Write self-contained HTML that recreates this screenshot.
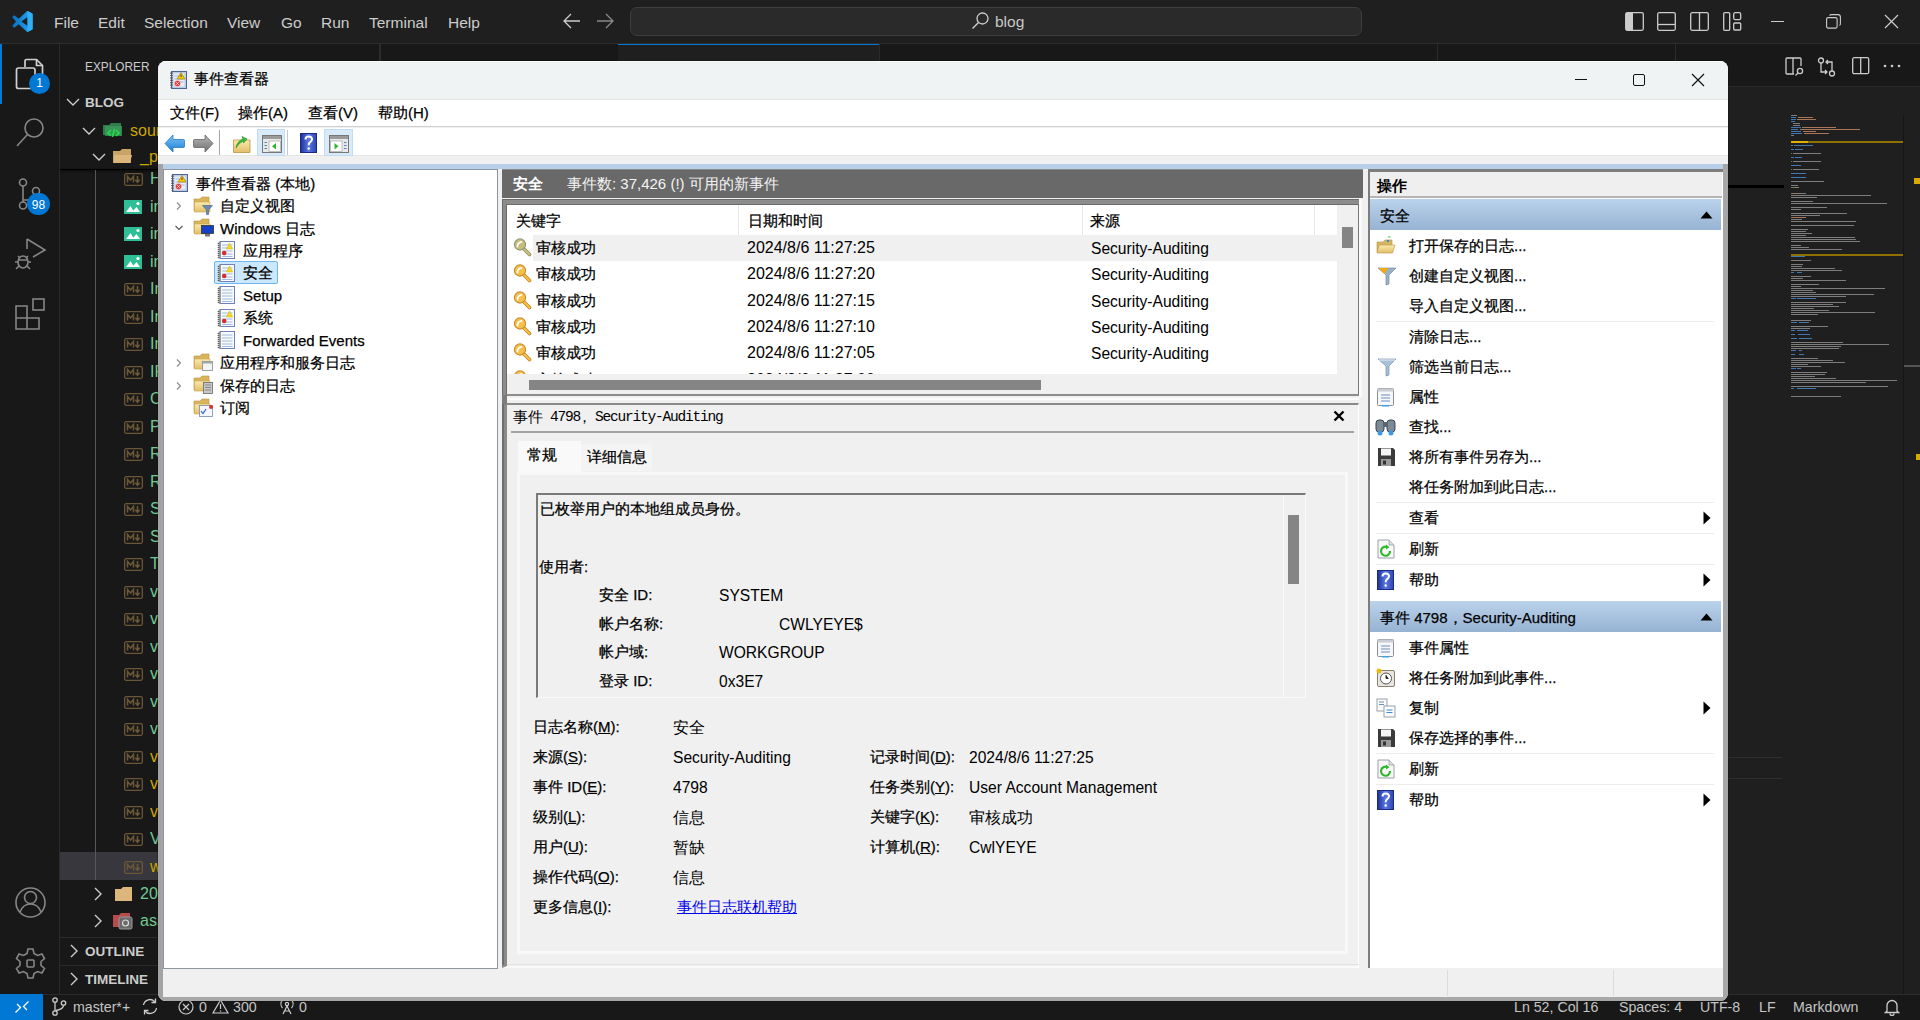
<!DOCTYPE html>
<html><head><meta charset="utf-8">
<style>
*{box-sizing:border-box;margin:0;padding:0}
html,body{width:1920px;height:1020px;overflow:hidden;background:#1f1f1f;font-family:"Liberation Sans",sans-serif;}
.a{position:absolute}
.t{position:absolute;white-space:nowrap;line-height:1}
/* vscode */
#tb{left:0;top:0;width:1920px;height:44px;background:#1f1f1f;border-bottom:1px solid #2b2b2b}
.mi{color:#cccccc;font-size:15.5px;top:15px}
#ab{left:0;top:44px;width:60px;height:950px;background:#181818;border-right:1px solid #2b2b2b}
#sb{left:60px;top:44px;width:320px;height:950px;background:#181818}
#st{left:0;top:994px;width:1920px;height:26px;background:#181818;border-top:1px solid #2b2b2b}
.sti{color:#c4c4c4;font-size:14.2px}
.fr{color:#73c991;font-size:16px}
.fy{color:#e2c08d;font-size:16px}
.md{position:absolute;width:18px;height:12px;border:1.5px solid #6b5638;border-radius:2px;color:#6b5638;font-size:8px;font-weight:bold;line-height:9px;text-align:center;letter-spacing:-0.5px}
/* event viewer */
#ev{left:158px;top:61px;width:1570px;height:940px;background:#f0f0f0;border-radius:8px;overflow:hidden;box-shadow:0 0 0 1px rgba(0,0,0,.18)}
.e{font-size:15px;color:#000;-webkit-text-stroke:0.25px #000}
</style></head><body>

<!-- ===== VS Code title bar ===== -->
<div id="tb" class="a"></div>
<svg class="a" style="left:12px;top:11px" width="21" height="21" viewBox="0 0 100 100">
 <defs><linearGradient id="vsg" x1="0" y1="0" x2="1" y2="0"><stop offset="0" stop-color="#0a6fc0"/><stop offset="1" stop-color="#25a7f5"/></linearGradient></defs>
 <path d="M70.9 1.2 Q73 0 75.5 1 L95 10.5 Q98 12 98 15.5 V84.5 Q98 88 95 89.5 L75.5 99 Q73 100 70.9 98.8 L32 63 L12.5 78 Q10.5 79.5 8.5 78 L2.5 72.5 Q0.5 70.5 2.5 68.5 L19 50 L2.5 31.5 Q0.5 29.5 2.5 27.5 L8.5 22 Q10.5 20.5 12.5 22 L32 37 Z M74 28 L45 50 L74 72 Z" fill="url(#vsg)" fill-rule="evenodd"/>
 <path d="M70.9 1.2 Q73 0 75.5 1 L95 10.5 Q98 12 98 15.5 V84.5 Q98 88 95 89.5 L75.5 99 Q73 100 70.9 98.8 Q74 97 74 93 V7 Q74 3 70.9 1.2 Z" fill="#2fb0f8"/>
</svg>
<div class="t mi" style="left:54px">File</div>
<div class="t mi" style="left:98px">Edit</div>
<div class="t mi" style="left:144px">Selection</div>
<div class="t mi" style="left:227px">View</div>
<div class="t mi" style="left:281px">Go</div>
<div class="t mi" style="left:321px">Run</div>
<div class="t mi" style="left:369px">Terminal</div>
<div class="t mi" style="left:448px">Help</div>
<svg class="a" style="left:563px;top:13px" width="18" height="16" viewBox="0 0 18 16"><path d="M1 8 H17 M8 1 L1 8 L8 15" stroke="#cccccc" stroke-width="1.3" fill="none"/></svg>
<svg class="a" style="left:596px;top:13px" width="18" height="16" viewBox="0 0 18 16"><path d="M1 8 H17 M10 1 L17 8 L10 15" stroke="#8a8a8a" stroke-width="1.3" fill="none"/></svg>
<div class="a" style="left:630px;top:7px;width:732px;height:29px;background:#2a2a2a;border:1px solid #3e3e3e;border-radius:7px"></div>
<svg class="a" style="left:971px;top:11px" width="19" height="19" viewBox="0 0 19 19"><circle cx="11.5" cy="7.5" r="5.5" stroke="#cccccc" stroke-width="1.3" fill="none"/><path d="M7.5 11.5 L1.5 17.5" stroke="#cccccc" stroke-width="1.4"/></svg>
<div class="t" style="left:995px;top:14px;color:#c8c8c8;font-size:15.5px">blog</div>
<!-- layout icons -->
<svg class="a" style="left:1625px;top:12px" width="19" height="19" viewBox="0 0 19 19"><rect x="0.7" y="0.7" width="17.6" height="17.6" rx="1.5" stroke="#cccccc" stroke-width="1.3" fill="none"/><rect x="1" y="1" width="7" height="17" fill="#cccccc"/></svg>
<svg class="a" style="left:1657px;top:12px" width="19" height="19" viewBox="0 0 19 19"><rect x="0.7" y="0.7" width="17.6" height="17.6" rx="1.5" stroke="#cccccc" stroke-width="1.3" fill="none"/><path d="M1 12.5 H18" stroke="#cccccc" stroke-width="1.3"/></svg>
<svg class="a" style="left:1690px;top:12px" width="19" height="19" viewBox="0 0 19 19"><rect x="0.7" y="0.7" width="17.6" height="17.6" rx="1.5" stroke="#cccccc" stroke-width="1.3" fill="none"/><path d="M9.5 1 V18" stroke="#cccccc" stroke-width="1.3"/></svg>
<svg class="a" style="left:1723px;top:12px" width="19" height="19" viewBox="0 0 19 19"><rect x="0.7" y="0.7" width="6" height="17.6" rx="1" stroke="#cccccc" stroke-width="1.3" fill="none"/><rect x="10.7" y="0.7" width="7" height="7" rx="1.5" stroke="#cccccc" stroke-width="1.3" fill="none"/><rect x="10.7" y="11" width="7" height="7" rx="1" stroke="#cccccc" stroke-width="1.3" fill="none"/></svg>
<div class="a" style="left:1771px;top:21px;width:13px;height:1px;background:#cccccc"></div>
<svg class="a" style="left:1826px;top:14px" width="15" height="15" viewBox="0 0 15 15"><rect x="0.6" y="3.6" width="10.5" height="10.5" rx="1.5" stroke="#cccccc" stroke-width="1.1" fill="none"/><path d="M3.5 1.5 Q4 0.6 5.5 0.6 H12 Q14.4 0.6 14.4 3 V9.5 Q14.4 11 13.5 11.5" stroke="#cccccc" stroke-width="1.1" fill="none"/></svg>
<svg class="a" style="left:1884px;top:14px" width="15" height="15" viewBox="0 0 15 15"><path d="M1 1 L14 14 M14 1 L1 14" stroke="#cccccc" stroke-width="1.2"/></svg>

<!-- ===== Activity bar ===== -->
<div id="ab" class="a"></div>
<div class="a" style="left:0;top:44px;width:2px;height:60px;background:#0078d4"></div>
<svg class="a" style="left:14px;top:57px" width="34" height="34" viewBox="0 0 34 34" fill="none" stroke="#d0d0d0" stroke-width="1.7">
 <path d="M11 10 V4 Q11 2.5 12.5 2.5 H22.5 L28.5 8.5 V21.5 Q28.5 23 27 23 H21"/><path d="M22.5 2.5 V8.5 H28.5"/>
 <path d="M2.5 13 Q2.5 11 4.5 11 H19 Q21 11 21 13 V29.5 Q21 31.5 19 31.5 H4.5 Q2.5 31.5 2.5 29.5 Z"/>
</svg>
<div class="a" style="left:29px;top:73px;width:21px;height:21px;border-radius:11px;background:#0078d4;color:#fff;font-size:12px;text-align:center;line-height:20px">1</div>
<svg class="a" style="left:14px;top:116px" width="34" height="34" viewBox="0 0 34 34" fill="none" stroke="#868686" stroke-width="1.6">
 <circle cx="20" cy="12" r="9"/><path d="M13.5 18.5 L3 30"/>
</svg>
<svg class="a" style="left:14px;top:176px" width="34" height="36" viewBox="0 0 34 36" fill="none" stroke="#868686" stroke-width="1.6">
 <circle cx="9" cy="6.5" r="3.5"/><circle cx="9" cy="29.5" r="3.5"/><circle cx="22" cy="15" r="3.5"/>
 <path d="M9 10 V26 M22 18.5 Q22 24 15 24 H9"/>
</svg>
<div class="a" style="left:27px;top:193px;width:23px;height:22px;border-radius:11px;background:#0078d4;color:#fff;font-size:12px;text-align:center;line-height:24px">98</div>
<svg class="a" style="left:13px;top:236px" width="36" height="36" viewBox="0 0 36 36" fill="none" stroke="#868686" stroke-width="1.6">
 <path d="M14 3 L32 14 L20 21"/><path d="M14 3 V13"/>
 <ellipse cx="10" cy="26" rx="5" ry="6"/><path d="M5 20 L7 22 M15 20 L13 22 M2 26 H5 M15 26 H18 M3 33 L6 30 M17 33 L14 30 M6 24 H14"/>
</svg>
<svg class="a" style="left:13px;top:296px" width="36" height="36" viewBox="0 0 36 36" fill="none" stroke="#868686" stroke-width="1.6">
 <path d="M3 10 H14 V33 H3 Z M3 22 H26 V33 H14"/><rect x="20" y="3" width="11" height="11"/>
</svg>
<svg class="a" style="left:13px;top:885px" width="35" height="35" viewBox="0 0 35 35" fill="none" stroke="#868686" stroke-width="1.6">
 <circle cx="17.5" cy="17.5" r="14.5"/><circle cx="17.5" cy="12.5" r="6"/><path d="M7 27 Q10 19 17.5 19 Q25 19 28 27"/>
</svg>
<svg class="a" style="left:13px;top:946px" width="35" height="35" viewBox="0 0 35 35" fill="none" stroke="#868686" stroke-width="1.6">
 <path d="M15 3 H20 L21 7.5 L24.5 9.5 L29 8 L31.5 12.5 L28 15.5 V19.5 L31.5 22.5 L29 27 L24.5 25.5 L21 27.5 L20 32 H15 L14 27.5 L10.5 25.5 L6 27 L3.5 22.5 L7 19.5 V15.5 L3.5 12.5 L6 8 L10.5 9.5 L14 7.5 Z"/>
 <rect x="14" y="14" width="7" height="7" rx="1"/>
</svg>

<!-- ===== Sidebar ===== -->
<div id="sb" class="a"></div>
<div class="t" style="left:85px;top:60px;color:#cccccc;font-size:13px;transform:scaleX(.91);transform-origin:0 0">EXPLORER</div>
<svg class="a" style="left:66px;top:98px" width="14" height="9" viewBox="0 0 14 9"><path d="M1 1 L7 7 L13 1" stroke="#cccccc" stroke-width="1.4" fill="none"/></svg>
<div class="t" style="left:85px;top:96px;color:#cccccc;font-size:13.5px;font-weight:bold">BLOG</div>
<svg class="a" style="left:82px;top:127px" width="14" height="9" viewBox="0 0 14 9"><path d="M1 1 L7 7 L13 1" stroke="#cccccc" stroke-width="1.4" fill="none"/></svg>
<svg class="a" style="left:103px;top:122px" width="20" height="16" viewBox="0 0 20 16"><path d="M0 3 H6 L8 1 H18 V13 H0 Z" fill="#2f7d4a"/><path d="M2 4 H19 V14 H2 Z" fill="#3b9a5c" opacity=".8"/><path d="M8 8 L5 11 L8 14 M13 8 L16 11 L13 14 M11.5 7 L9.5 15" stroke="#22dd44" stroke-width="1.6" fill="none"/></svg>
<div class="t fy" style="left:130px;top:123px;color:#cca700">source</div>
<svg class="a" style="left:92px;top:153px" width="14" height="9" viewBox="0 0 14 9"><path d="M1 1 L7 7 L13 1" stroke="#cccccc" stroke-width="1.4" fill="none"/></svg>
<svg class="a" style="left:113px;top:149px" width="20" height="15" viewBox="0 0 20 15"><path d="M0 2 H7 L9 0 H18 V14 H0 Z" fill="#c9a467"/><path d="M1 6 H19 L17 14 H1 Z" fill="#dcb67a"/></svg>
<div class="t fy" style="left:140px;top:149px;color:#cca700">_posts</div>
<div class="a" style="left:60px;top:169px;width:320px;height:1px;background:#000;box-shadow:0 1px 3px #000"></div>
<div class="a" style="left:60px;top:852px;width:320px;height:28px;background:#37373d"></div>
<div class="a" style="left:95px;top:170px;width:1px;height:710px;background:#585858"></div>
<svg class="a" style="left:124px;top:173.0px" width="19" height="13" viewBox="0 0 19 13" fill="none" stroke="#6b5638" stroke-width="1.3"><rect x=".65" y=".65" width="17.7" height="11.7" rx="1.5"/><path d="M3.5 9.5 V3.5 L6.5 7 L9.5 3.5 V9.5" stroke-width="1.6"/><path d="M13.5 3 V9 M11.3 6.8 L13.5 9.3 L15.7 6.8" stroke-width="1.6"/></svg>
<div class="t" style="left:150px;top:171.0px;color:#73c991;font-size:16px">Hexo</div>
<svg class="a" style="left:124px;top:199.5px" width="18" height="14" viewBox="0 0 18 14"><rect width="18" height="14" fill="#2fbf96"/><path d="M2 12 L6.5 6 L10 12 Z M8 12 L12.5 7 L16 12 Z" fill="#fff"/><circle cx="14" cy="3.5" r="1.6" fill="#fff"/></svg>
<div class="t" style="left:150px;top:198.5px;color:#73c991;font-size:16px">image1</div>
<svg class="a" style="left:124px;top:227.0px" width="18" height="14" viewBox="0 0 18 14"><rect width="18" height="14" fill="#2fbf96"/><path d="M2 12 L6.5 6 L10 12 Z M8 12 L12.5 7 L16 12 Z" fill="#fff"/><circle cx="14" cy="3.5" r="1.6" fill="#fff"/></svg>
<div class="t" style="left:150px;top:226.0px;color:#73c991;font-size:16px">image2</div>
<svg class="a" style="left:124px;top:254.5px" width="18" height="14" viewBox="0 0 18 14"><rect width="18" height="14" fill="#2fbf96"/><path d="M2 12 L6.5 6 L10 12 Z M8 12 L12.5 7 L16 12 Z" fill="#fff"/><circle cx="14" cy="3.5" r="1.6" fill="#fff"/></svg>
<div class="t" style="left:150px;top:253.5px;color:#73c991;font-size:16px">image3</div>
<svg class="a" style="left:124px;top:283.0px" width="19" height="13" viewBox="0 0 19 13" fill="none" stroke="#6b5638" stroke-width="1.3"><rect x=".65" y=".65" width="17.7" height="11.7" rx="1.5"/><path d="M3.5 9.5 V3.5 L6.5 7 L9.5 3.5 V9.5" stroke-width="1.6"/><path d="M13.5 3 V9 M11.3 6.8 L13.5 9.3 L15.7 6.8" stroke-width="1.6"/></svg>
<div class="t" style="left:150px;top:281.0px;color:#73c991;font-size:16px">Intro</div>
<svg class="a" style="left:124px;top:310.5px" width="19" height="13" viewBox="0 0 19 13" fill="none" stroke="#6b5638" stroke-width="1.3"><rect x=".65" y=".65" width="17.7" height="11.7" rx="1.5"/><path d="M3.5 9.5 V3.5 L6.5 7 L9.5 3.5 V9.5" stroke-width="1.6"/><path d="M13.5 3 V9 M11.3 6.8 L13.5 9.3 L15.7 6.8" stroke-width="1.6"/></svg>
<div class="t" style="left:150px;top:308.5px;color:#73c991;font-size:16px">Install</div>
<svg class="a" style="left:124px;top:338.0px" width="19" height="13" viewBox="0 0 19 13" fill="none" stroke="#6b5638" stroke-width="1.3"><rect x=".65" y=".65" width="17.7" height="11.7" rx="1.5"/><path d="M3.5 9.5 V3.5 L6.5 7 L9.5 3.5 V9.5" stroke-width="1.6"/><path d="M13.5 3 V9 M11.3 6.8 L13.5 9.3 L15.7 6.8" stroke-width="1.6"/></svg>
<div class="t" style="left:150px;top:336.0px;color:#73c991;font-size:16px">Index</div>
<svg class="a" style="left:124px;top:365.5px" width="19" height="13" viewBox="0 0 19 13" fill="none" stroke="#6b5638" stroke-width="1.3"><rect x=".65" y=".65" width="17.7" height="11.7" rx="1.5"/><path d="M3.5 9.5 V3.5 L6.5 7 L9.5 3.5 V9.5" stroke-width="1.6"/><path d="M13.5 3 V9 M11.3 6.8 L13.5 9.3 L15.7 6.8" stroke-width="1.6"/></svg>
<div class="t" style="left:150px;top:363.5px;color:#73c991;font-size:16px">IPv6</div>
<svg class="a" style="left:124px;top:393.0px" width="19" height="13" viewBox="0 0 19 13" fill="none" stroke="#6b5638" stroke-width="1.3"><rect x=".65" y=".65" width="17.7" height="11.7" rx="1.5"/><path d="M3.5 9.5 V3.5 L6.5 7 L9.5 3.5 V9.5" stroke-width="1.6"/><path d="M13.5 3 V9 M11.3 6.8 L13.5 9.3 L15.7 6.8" stroke-width="1.6"/></svg>
<div class="t" style="left:150px;top:391.0px;color:#73c991;font-size:16px">Config</div>
<svg class="a" style="left:124px;top:420.5px" width="19" height="13" viewBox="0 0 19 13" fill="none" stroke="#6b5638" stroke-width="1.3"><rect x=".65" y=".65" width="17.7" height="11.7" rx="1.5"/><path d="M3.5 9.5 V3.5 L6.5 7 L9.5 3.5 V9.5" stroke-width="1.6"/><path d="M13.5 3 V9 M11.3 6.8 L13.5 9.3 L15.7 6.8" stroke-width="1.6"/></svg>
<div class="t" style="left:150px;top:418.5px;color:#73c991;font-size:16px">Post</div>
<svg class="a" style="left:124px;top:448.0px" width="19" height="13" viewBox="0 0 19 13" fill="none" stroke="#6b5638" stroke-width="1.3"><rect x=".65" y=".65" width="17.7" height="11.7" rx="1.5"/><path d="M3.5 9.5 V3.5 L6.5 7 L9.5 3.5 V9.5" stroke-width="1.6"/><path d="M13.5 3 V9 M11.3 6.8 L13.5 9.3 L15.7 6.8" stroke-width="1.6"/></svg>
<div class="t" style="left:150px;top:446.0px;color:#73c991;font-size:16px">Readme</div>
<svg class="a" style="left:124px;top:475.5px" width="19" height="13" viewBox="0 0 19 13" fill="none" stroke="#6b5638" stroke-width="1.3"><rect x=".65" y=".65" width="17.7" height="11.7" rx="1.5"/><path d="M3.5 9.5 V3.5 L6.5 7 L9.5 3.5 V9.5" stroke-width="1.6"/><path d="M13.5 3 V9 M11.3 6.8 L13.5 9.3 L15.7 6.8" stroke-width="1.6"/></svg>
<div class="t" style="left:150px;top:473.5px;color:#73c991;font-size:16px">Rules</div>
<svg class="a" style="left:124px;top:503.0px" width="19" height="13" viewBox="0 0 19 13" fill="none" stroke="#6b5638" stroke-width="1.3"><rect x=".65" y=".65" width="17.7" height="11.7" rx="1.5"/><path d="M3.5 9.5 V3.5 L6.5 7 L9.5 3.5 V9.5" stroke-width="1.6"/><path d="M13.5 3 V9 M11.3 6.8 L13.5 9.3 L15.7 6.8" stroke-width="1.6"/></svg>
<div class="t" style="left:150px;top:501.0px;color:#73c991;font-size:16px">Setup</div>
<svg class="a" style="left:124px;top:530.5px" width="19" height="13" viewBox="0 0 19 13" fill="none" stroke="#6b5638" stroke-width="1.3"><rect x=".65" y=".65" width="17.7" height="11.7" rx="1.5"/><path d="M3.5 9.5 V3.5 L6.5 7 L9.5 3.5 V9.5" stroke-width="1.6"/><path d="M13.5 3 V9 M11.3 6.8 L13.5 9.3 L15.7 6.8" stroke-width="1.6"/></svg>
<div class="t" style="left:150px;top:528.5px;color:#73c991;font-size:16px">Server</div>
<svg class="a" style="left:124px;top:558.0px" width="19" height="13" viewBox="0 0 19 13" fill="none" stroke="#6b5638" stroke-width="1.3"><rect x=".65" y=".65" width="17.7" height="11.7" rx="1.5"/><path d="M3.5 9.5 V3.5 L6.5 7 L9.5 3.5 V9.5" stroke-width="1.6"/><path d="M13.5 3 V9 M11.3 6.8 L13.5 9.3 L15.7 6.8" stroke-width="1.6"/></svg>
<div class="t" style="left:150px;top:556.0px;color:#73c991;font-size:16px">Theme</div>
<svg class="a" style="left:124px;top:585.5px" width="19" height="13" viewBox="0 0 19 13" fill="none" stroke="#6b5638" stroke-width="1.3"><rect x=".65" y=".65" width="17.7" height="11.7" rx="1.5"/><path d="M3.5 9.5 V3.5 L6.5 7 L9.5 3.5 V9.5" stroke-width="1.6"/><path d="M13.5 3 V9 M11.3 6.8 L13.5 9.3 L15.7 6.8" stroke-width="1.6"/></svg>
<div class="t" style="left:150px;top:583.5px;color:#73c991;font-size:16px">vscode1</div>
<svg class="a" style="left:124px;top:613.0px" width="19" height="13" viewBox="0 0 19 13" fill="none" stroke="#6b5638" stroke-width="1.3"><rect x=".65" y=".65" width="17.7" height="11.7" rx="1.5"/><path d="M3.5 9.5 V3.5 L6.5 7 L9.5 3.5 V9.5" stroke-width="1.6"/><path d="M13.5 3 V9 M11.3 6.8 L13.5 9.3 L15.7 6.8" stroke-width="1.6"/></svg>
<div class="t" style="left:150px;top:611.0px;color:#73c991;font-size:16px">vscode2</div>
<svg class="a" style="left:124px;top:640.5px" width="19" height="13" viewBox="0 0 19 13" fill="none" stroke="#6b5638" stroke-width="1.3"><rect x=".65" y=".65" width="17.7" height="11.7" rx="1.5"/><path d="M3.5 9.5 V3.5 L6.5 7 L9.5 3.5 V9.5" stroke-width="1.6"/><path d="M13.5 3 V9 M11.3 6.8 L13.5 9.3 L15.7 6.8" stroke-width="1.6"/></svg>
<div class="t" style="left:150px;top:638.5px;color:#73c991;font-size:16px">vscode3</div>
<svg class="a" style="left:124px;top:668.0px" width="19" height="13" viewBox="0 0 19 13" fill="none" stroke="#6b5638" stroke-width="1.3"><rect x=".65" y=".65" width="17.7" height="11.7" rx="1.5"/><path d="M3.5 9.5 V3.5 L6.5 7 L9.5 3.5 V9.5" stroke-width="1.6"/><path d="M13.5 3 V9 M11.3 6.8 L13.5 9.3 L15.7 6.8" stroke-width="1.6"/></svg>
<div class="t" style="left:150px;top:666.0px;color:#73c991;font-size:16px">vscode4</div>
<svg class="a" style="left:124px;top:695.5px" width="19" height="13" viewBox="0 0 19 13" fill="none" stroke="#6b5638" stroke-width="1.3"><rect x=".65" y=".65" width="17.7" height="11.7" rx="1.5"/><path d="M3.5 9.5 V3.5 L6.5 7 L9.5 3.5 V9.5" stroke-width="1.6"/><path d="M13.5 3 V9 M11.3 6.8 L13.5 9.3 L15.7 6.8" stroke-width="1.6"/></svg>
<div class="t" style="left:150px;top:693.5px;color:#73c991;font-size:16px">vscode5</div>
<svg class="a" style="left:124px;top:723.0px" width="19" height="13" viewBox="0 0 19 13" fill="none" stroke="#6b5638" stroke-width="1.3"><rect x=".65" y=".65" width="17.7" height="11.7" rx="1.5"/><path d="M3.5 9.5 V3.5 L6.5 7 L9.5 3.5 V9.5" stroke-width="1.6"/><path d="M13.5 3 V9 M11.3 6.8 L13.5 9.3 L15.7 6.8" stroke-width="1.6"/></svg>
<div class="t" style="left:150px;top:721.0px;color:#73c991;font-size:16px">vscode6</div>
<svg class="a" style="left:124px;top:750.5px" width="19" height="13" viewBox="0 0 19 13" fill="none" stroke="#6b5638" stroke-width="1.3"><rect x=".65" y=".65" width="17.7" height="11.7" rx="1.5"/><path d="M3.5 9.5 V3.5 L6.5 7 L9.5 3.5 V9.5" stroke-width="1.6"/><path d="M13.5 3 V9 M11.3 6.8 L13.5 9.3 L15.7 6.8" stroke-width="1.6"/></svg>
<div class="t" style="left:150px;top:748.5px;color:#cca700;font-size:16px">vscode7</div>
<svg class="a" style="left:124px;top:778.0px" width="19" height="13" viewBox="0 0 19 13" fill="none" stroke="#6b5638" stroke-width="1.3"><rect x=".65" y=".65" width="17.7" height="11.7" rx="1.5"/><path d="M3.5 9.5 V3.5 L6.5 7 L9.5 3.5 V9.5" stroke-width="1.6"/><path d="M13.5 3 V9 M11.3 6.8 L13.5 9.3 L15.7 6.8" stroke-width="1.6"/></svg>
<div class="t" style="left:150px;top:776.0px;color:#cca700;font-size:16px">vscode8</div>
<svg class="a" style="left:124px;top:805.5px" width="19" height="13" viewBox="0 0 19 13" fill="none" stroke="#6b5638" stroke-width="1.3"><rect x=".65" y=".65" width="17.7" height="11.7" rx="1.5"/><path d="M3.5 9.5 V3.5 L6.5 7 L9.5 3.5 V9.5" stroke-width="1.6"/><path d="M13.5 3 V9 M11.3 6.8 L13.5 9.3 L15.7 6.8" stroke-width="1.6"/></svg>
<div class="t" style="left:150px;top:803.5px;color:#cca700;font-size:16px">vscode9</div>
<svg class="a" style="left:124px;top:833.0px" width="19" height="13" viewBox="0 0 19 13" fill="none" stroke="#6b5638" stroke-width="1.3"><rect x=".65" y=".65" width="17.7" height="11.7" rx="1.5"/><path d="M3.5 9.5 V3.5 L6.5 7 L9.5 3.5 V9.5" stroke-width="1.6"/><path d="M13.5 3 V9 M11.3 6.8 L13.5 9.3 L15.7 6.8" stroke-width="1.6"/></svg>
<div class="t" style="left:150px;top:831.0px;color:#73c991;font-size:16px">Vue</div>
<svg class="a" style="left:124px;top:860.5px" width="19" height="13" viewBox="0 0 19 13" fill="none" stroke="#6b5638" stroke-width="1.3"><rect x=".65" y=".65" width="17.7" height="11.7" rx="1.5"/><path d="M3.5 9.5 V3.5 L6.5 7 L9.5 3.5 V9.5" stroke-width="1.6"/><path d="M13.5 3 V9 M11.3 6.8 L13.5 9.3 L15.7 6.8" stroke-width="1.6"/></svg>
<div class="t" style="left:150px;top:858.5px;color:#cca700;font-size:16px">windows</div>
<svg class="a" style="left:94px;top:887px" width="9" height="14" viewBox="0 0 9 14"><path d="M1 1 L7 7 L1 13" stroke="#cccccc" stroke-width="1.4" fill="none"/></svg>
<svg class="a" style="left:115px;top:887px" width="17" height="14" viewBox="0 0 17 14"><path d="M0 2 H6 L8 0 H17 V14 H0 Z" fill="#dcb67a"/></svg>
<div class="t" style="left:140px;top:886px;color:#73c991;font-size:16px">2024</div>
<svg class="a" style="left:94px;top:914px" width="9" height="14" viewBox="0 0 9 14"><path d="M1 1 L7 7 L1 13" stroke="#cccccc" stroke-width="1.4" fill="none"/></svg>
<svg class="a" style="left:113px;top:912px" width="20" height="18" viewBox="0 0 20 18"><path d="M0 3 H6 L8 1 H17 V15 H0 Z" fill="#b84b4b"/><rect x="6" y="5" width="13" height="12" rx="1.5" fill="#6a6a6a" stroke="#9a9a9a"/><circle cx="12.5" cy="11" r="3" stroke="#ddd" fill="none" stroke-width="1.2"/></svg>
<div class="t" style="left:140px;top:913px;color:#73c991;font-size:16px">assets</div>
<div class="a" style="left:60px;top:937px;width:320px;height:1px;background:#2b2b2b"></div>
<svg class="a" style="left:70px;top:944px" width="9" height="14" viewBox="0 0 9 14"><path d="M1 1 L7 7 L1 13" stroke="#cccccc" stroke-width="1.4" fill="none"/></svg>
<div class="t" style="left:85px;top:945px;color:#cccccc;font-size:13.5px;font-weight:bold">OUTLINE</div>
<div class="a" style="left:60px;top:965px;width:320px;height:1px;background:#2b2b2b"></div>
<svg class="a" style="left:70px;top:972px" width="9" height="14" viewBox="0 0 9 14"><path d="M1 1 L7 7 L1 13" stroke="#cccccc" stroke-width="1.4" fill="none"/></svg>
<div class="t" style="left:85px;top:973px;color:#cccccc;font-size:13.5px;font-weight:bold">TIMELINE</div>

<!-- ===== Editor right ===== -->
<div class="a" style="left:380px;top:44px;width:1540px;height:43px;background:#181818;border-bottom:1px solid #2b2b2b"></div>
<div class="a" style="left:380px;top:44px;width:1px;height:950px;background:#2b2b2b"></div>
<div class="a" style="left:379px;top:44px;width:1px;height:42px;background:#2b2b2b"></div>
<div class="a" style="left:879px;top:44px;width:1px;height:42px;background:#2b2b2b"></div>
<div class="a" style="left:1437px;top:44px;width:1px;height:42px;background:#2b2b2b"></div>
<div class="a" style="left:1675px;top:44px;width:1px;height:42px;background:#2b2b2b"></div>
<div class="a" style="left:618px;top:44px;width:261px;height:43px;background:#1f1f1f;border-top:1px solid #0078d4"></div>
<svg class="a" style="left:1785px;top:57px" width="20" height="20" viewBox="0 0 20 20" fill="none" stroke="#cccccc" stroke-width="1.3"><path d="M9 17 H2 Q1 17 1 16 V2 Q1 1 2 1 H15 Q16 1 16 2 V9"/><path d="M8 1 V17"/><circle cx="15" cy="14" r="2.6"/><path d="M13 16 L10.5 18.5"/></svg>
<svg class="a" style="left:1817px;top:57px" width="20" height="20" viewBox="0 0 20 20" fill="none" stroke="#cccccc" stroke-width="1.3"><circle cx="4" cy="3.5" r="2.5"/><circle cx="15" cy="16.5" r="2.5"/><path d="M4 6 V15 H10 M8 13 L10 15 L8 17 M15 14 V5 H9 M11 3 L9 5 L11 7"/></svg>
<svg class="a" style="left:1852px;top:57px" width="19" height="19" viewBox="0 0 19 19" fill="none" stroke="#cccccc" stroke-width="1.3"><rect x="0.7" y="0.7" width="16" height="16" rx="1.5"/><path d="M8.7 1 V17"/></svg>
<svg class="a" style="left:1883px;top:64px" width="18" height="4" viewBox="0 0 18 4" fill="#cccccc"><circle cx="2" cy="2" r="1.3"/><circle cx="9" cy="2" r="1.3"/><circle cx="16" cy="2" r="1.3"/></svg>
<div class="a" style="left:1727px;top:185px;width:57px;height:3px;background:#000"></div>
<div class="a" style="left:1791px;top:115px;width:6px;height:1px;background:#7d7d7d"></div>
<div class="a" style="left:1791px;top:117px;width:5px;height:1px;background:#3f78b0"></div>
<div class="a" style="left:1798px;top:117px;width:15px;height:1px;background:#a87658"></div>
<div class="a" style="left:1791px;top:119px;width:5px;height:1px;background:#3f78b0"></div>
<div class="a" style="left:1797px;top:119px;width:19px;height:1px;background:#a87658"></div>
<div class="a" style="left:1791px;top:121px;width:4px;height:1px;background:#3f78b0"></div>
<div class="a" style="left:1793px;top:123px;width:7px;height:1px;background:#7d7d7d"></div>
<div class="a" style="left:1793px;top:125px;width:7px;height:1px;background:#7d7d7d"></div>
<div class="a" style="left:1791px;top:127px;width:10px;height:1px;background:#3f78b0"></div>
<div class="a" style="left:1802px;top:127px;width:34px;height:1px;background:#a87658"></div>
<div class="a" style="left:1791px;top:129px;width:7px;height:1px;background:#3f78b0"></div>
<div class="a" style="left:1800px;top:129px;width:60px;height:1px;background:#a87658"></div>
<div class="a" style="left:1791px;top:131px;width:10px;height:1px;background:#3f78b0"></div>
<div class="a" style="left:1803px;top:131px;width:13px;height:1px;background:#a87658"></div>
<div class="a" style="left:1791px;top:133px;width:11px;height:1px;background:#3f78b0"></div>
<div class="a" style="left:1804px;top:133px;width:25px;height:1px;background:#a87658"></div>
<div class="a" style="left:1791px;top:135px;width:3px;height:1px;background:#7d7d7d"></div>
<div class="a" style="left:1791px;top:145px;width:2px;height:1px;background:#3f78b0"></div>
<div class="a" style="left:1794px;top:145px;width:19px;height:1px;background:#3f78b0"></div>
<div class="a" style="left:1791px;top:149px;width:3px;height:1px;background:#3f78b0"></div>
<div class="a" style="left:1795px;top:149px;width:8px;height:1px;background:#3f78b0"></div>
<div class="a" style="left:1791px;top:153px;width:1px;height:1px;background:#5a8a4a"></div>
<div class="a" style="left:1793px;top:153px;width:28px;height:1px;background:#7d7d7d"></div>
<div class="a" style="left:1791px;top:157px;width:3px;height:1px;background:#3f78b0"></div>
<div class="a" style="left:1795px;top:157px;width:7px;height:1px;background:#3f78b0"></div>
<div class="a" style="left:1791px;top:161px;width:1px;height:1px;background:#5a8a4a"></div>
<div class="a" style="left:1793px;top:161px;width:28px;height:1px;background:#7d7d7d"></div>
<div class="a" style="left:1791px;top:165px;width:4px;height:1px;background:#3f78b0"></div>
<div class="a" style="left:1795px;top:165px;width:6px;height:1px;background:#3f78b0"></div>
<div class="a" style="left:1791px;top:169px;width:1px;height:1px;background:#5a8a4a"></div>
<div class="a" style="left:1793px;top:169px;width:26px;height:1px;background:#7d7d7d"></div>
<div class="a" style="left:1791px;top:173px;width:15px;height:1px;background:#3f78b0"></div>
<div class="a" style="left:1791px;top:177px;width:4px;height:1px;background:#3f78b0"></div>
<div class="a" style="left:1795px;top:177px;width:11px;height:1px;background:#3f78b0"></div>
<div class="a" style="left:1791px;top:181px;width:33px;height:1px;background:#7d7d7d"></div>
<div class="a" style="left:1791px;top:185px;width:7px;height:1px;background:#7d7d7d"></div>
<div class="a" style="left:1791px;top:187px;width:4px;height:1px;background:#5a8a4a"></div>
<div class="a" style="left:1795px;top:187px;width:4px;height:1px;background:#a87658"></div>
<div class="a" style="left:1791px;top:193px;width:15px;height:1px;background:#7d7d7d"></div>
<div class="a" style="left:1793px;top:193px;width:4px;height:1px;background:#a87658"></div>
<div class="a" style="left:1791px;top:195px;width:80px;height:1px;background:#7d7d7d"></div>
<div class="a" style="left:1791px;top:197px;width:26px;height:1px;background:#7d7d7d"></div>
<div class="a" style="left:1791px;top:201px;width:22px;height:1px;background:#7d7d7d"></div>
<div class="a" style="left:1791px;top:203px;width:96px;height:1px;background:#7d7d7d"></div>
<div class="a" style="left:1791px;top:207px;width:36px;height:1px;background:#7d7d7d"></div>
<div class="a" style="left:1791px;top:209px;width:10px;height:1px;background:#7d7d7d"></div>
<div class="a" style="left:1791px;top:213px;width:56px;height:1px;background:#7d7d7d"></div>
<div class="a" style="left:1791px;top:215px;width:29px;height:1px;background:#7d7d7d"></div>
<div class="a" style="left:1791px;top:217px;width:15px;height:1px;background:#a87658"></div>
<div class="a" style="left:1791px;top:219px;width:11px;height:1px;background:#7d7d7d"></div>
<div class="a" style="left:1791px;top:221px;width:65px;height:1px;background:#7d7d7d"></div>
<div class="a" style="left:1791px;top:225px;width:63px;height:1px;background:#7d7d7d"></div>
<div class="a" style="left:1791px;top:229px;width:17px;height:1px;background:#7d7d7d"></div>
<div class="a" style="left:1791px;top:231px;width:15px;height:1px;background:#7d7d7d"></div>
<div class="a" style="left:1791px;top:233px;width:21px;height:1px;background:#7d7d7d"></div>
<div class="a" style="left:1791px;top:235px;width:15px;height:1px;background:#7d7d7d"></div>
<div class="a" style="left:1791px;top:237px;width:64px;height:1px;background:#7d7d7d"></div>
<div class="a" style="left:1791px;top:239px;width:65px;height:1px;background:#7d7d7d"></div>
<div class="a" style="left:1791px;top:241px;width:69px;height:1px;background:#7d7d7d"></div>
<div class="a" style="left:1791px;top:245px;width:10px;height:1px;background:#7d7d7d"></div>
<div class="a" style="left:1791px;top:247px;width:18px;height:1px;background:#7d7d7d"></div>
<div class="a" style="left:1791px;top:249px;width:51px;height:1px;background:#7d7d7d"></div>
<div class="a" style="left:1791px;top:256px;width:14px;height:1px;background:#3f78b0"></div>
<div class="a" style="left:1791px;top:260px;width:20px;height:1px;background:#7d7d7d"></div>
<div class="a" style="left:1791px;top:264px;width:12px;height:1px;background:#7d7d7d"></div>
<div class="a" style="left:1791px;top:266px;width:11px;height:1px;background:#7d7d7d"></div>
<div class="a" style="left:1791px;top:268px;width:44px;height:1px;background:#7d7d7d"></div>
<div class="a" style="left:1791px;top:270px;width:51px;height:1px;background:#7d7d7d"></div>
<div class="a" style="left:1791px;top:272px;width:3px;height:1px;background:#3f78b0"></div>
<div class="a" style="left:1797px;top:272px;width:5px;height:1px;background:#3f78b0"></div>
<div class="a" style="left:1791px;top:276px;width:20px;height:1px;background:#7d7d7d"></div>
<div class="a" style="left:1791px;top:278px;width:12px;height:1px;background:#7d7d7d"></div>
<div class="a" style="left:1791px;top:280px;width:55px;height:1px;background:#7d7d7d"></div>
<div class="a" style="left:1791px;top:284px;width:28px;height:1px;background:#7d7d7d"></div>
<div class="a" style="left:1791px;top:286px;width:10px;height:1px;background:#7d7d7d"></div>
<div class="a" style="left:1791px;top:288px;width:94px;height:1px;background:#7d7d7d"></div>
<div class="a" style="left:1791px;top:290px;width:22px;height:1px;background:#7d7d7d"></div>
<div class="a" style="left:1791px;top:292px;width:25px;height:1px;background:#7d7d7d"></div>
<div class="a" style="left:1791px;top:294px;width:83px;height:1px;background:#7d7d7d"></div>
<div class="a" style="left:1791px;top:296px;width:55px;height:1px;background:#7d7d7d"></div>
<div class="a" style="left:1791px;top:298px;width:5px;height:1px;background:#3f78b0"></div>
<div class="a" style="left:1797px;top:298px;width:19px;height:1px;background:#3f78b0"></div>
<div class="a" style="left:1791px;top:302px;width:55px;height:1px;background:#7d7d7d"></div>
<div class="a" style="left:1791px;top:304px;width:42px;height:1px;background:#7d7d7d"></div>
<div class="a" style="left:1791px;top:306px;width:48px;height:1px;background:#7d7d7d"></div>
<div class="a" style="left:1791px;top:308px;width:23px;height:1px;background:#7d7d7d"></div>
<div class="a" style="left:1791px;top:310px;width:38px;height:1px;background:#7d7d7d"></div>
<div class="a" style="left:1791px;top:312px;width:84px;height:1px;background:#7d7d7d"></div>
<div class="a" style="left:1791px;top:314px;width:27px;height:1px;background:#7d7d7d"></div>
<div class="a" style="left:1791px;top:320px;width:20px;height:1px;background:#7d7d7d"></div>
<div class="a" style="left:1791px;top:322px;width:6px;height:1px;background:#3f78b0"></div>
<div class="a" style="left:1799px;top:322px;width:10px;height:1px;background:#3f78b0"></div>
<div class="a" style="left:1791px;top:326px;width:37px;height:1px;background:#7d7d7d"></div>
<div class="a" style="left:1791px;top:328px;width:19px;height:1px;background:#7d7d7d"></div>
<div class="a" style="left:1791px;top:330px;width:4px;height:1px;background:#3f78b0"></div>
<div class="a" style="left:1797px;top:330px;width:11px;height:1px;background:#3f78b0"></div>
<div class="a" style="left:1791px;top:334px;width:4px;height:1px;background:#3f78b0"></div>
<div class="a" style="left:1798px;top:334px;width:12px;height:1px;background:#3f78b0"></div>
<div class="a" style="left:1791px;top:338px;width:6px;height:1px;background:#3f78b0"></div>
<div class="a" style="left:1799px;top:338px;width:13px;height:1px;background:#3f78b0"></div>
<div class="a" style="left:1791px;top:342px;width:52px;height:1px;background:#7d7d7d"></div>
<div class="a" style="left:1791px;top:344px;width:98px;height:1px;background:#7d7d7d"></div>
<div class="a" style="left:1791px;top:346px;width:50px;height:1px;background:#7d7d7d"></div>
<div class="a" style="left:1791px;top:348px;width:48px;height:1px;background:#7d7d7d"></div>
<div class="a" style="left:1791px;top:350px;width:5px;height:1px;background:#3f78b0"></div>
<div class="a" style="left:1799px;top:350px;width:3px;height:1px;background:#3f78b0"></div>
<div class="a" style="left:1791px;top:354px;width:4px;height:1px;background:#3f78b0"></div>
<div class="a" style="left:1799px;top:354px;width:5px;height:1px;background:#3f78b0"></div>
<div class="a" style="left:1791px;top:358px;width:27px;height:1px;background:#7d7d7d"></div>
<div class="a" style="left:1791px;top:360px;width:42px;height:1px;background:#7d7d7d"></div>
<div class="a" style="left:1791px;top:362px;width:54px;height:1px;background:#7d7d7d"></div>
<div class="a" style="left:1791px;top:364px;width:17px;height:1px;background:#7d7d7d"></div>
<div class="a" style="left:1791px;top:366px;width:30px;height:1px;background:#7d7d7d"></div>
<div class="a" style="left:1791px;top:368px;width:5px;height:1px;background:#3f78b0"></div>
<div class="a" style="left:1797px;top:368px;width:4px;height:1px;background:#3f78b0"></div>
<div class="a" style="left:1791px;top:372px;width:36px;height:1px;background:#7d7d7d"></div>
<div class="a" style="left:1791px;top:374px;width:34px;height:1px;background:#7d7d7d"></div>
<div class="a" style="left:1791px;top:376px;width:24px;height:1px;background:#7d7d7d"></div>
<div class="a" style="left:1791px;top:378px;width:45px;height:1px;background:#7d7d7d"></div>
<div class="a" style="left:1791px;top:380px;width:106px;height:1px;background:#7d7d7d"></div>
<div class="a" style="left:1791px;top:382px;width:75px;height:1px;background:#7d7d7d"></div>
<div class="a" style="left:1791px;top:386px;width:97px;height:1px;background:#7d7d7d"></div>
<div class="a" style="left:1791px;top:388px;width:3px;height:1px;background:#3f78b0"></div>
<div class="a" style="left:1797px;top:388px;width:19px;height:1px;background:#3f78b0"></div>
<div class="a" style="left:1791px;top:396px;width:50px;height:1px;background:#7d7d7d"></div>
<div class="a" style="left:1791px;top:141px;width:112px;height:2px;background:#8f7000"></div>
<div class="a" style="left:1791px;top:141px;width:17px;height:2px;background:#e0b000"></div>
<div class="a" style="left:1791px;top:254px;width:112px;height:2px;background:#8f7000"></div>
<div class="a" style="left:1903px;top:115px;width:17px;height:879px;background:#1f1f1f;border-left:1px solid #151515"></div>
<div class="a" style="left:1916px;top:454px;width:4px;height:6px;background:#d4ac00"></div>
<div class="a" style="left:1904px;top:365px;width:16px;height:2px;background:#555"></div>
<div class="a" style="left:1914px;top:178px;width:6px;height:6px;background:#d8a800"></div>
<div class="a" style="left:1727px;top:757px;width:55px;height:1px;background:#2e2e2e"></div>
<div class="a" style="left:1727px;top:778px;width:55px;height:1px;background:#2e2e2e"></div>

<!-- ===== Status bar ===== -->
<div id="st" class="a"></div>
<div class="a" style="left:0;top:994px;width:43px;height:26px;background:#0078d4"></div>
<svg class="a" style="left:14px;top:999px" width="16" height="16" viewBox="0 0 16 16" fill="none" stroke="#fff" stroke-width="1.3"><path d="M1.5 13.5 L6.5 8.5 L3 5"/><path d="M14.5 2.5 L9.5 7.5 L13 11"/></svg>
<svg class="a" style="left:51px;top:997px" width="16" height="19" viewBox="0 0 16 19" fill="none" stroke="#cccccc" stroke-width="1.3"><circle cx="4" cy="3" r="2.2"/><circle cx="4" cy="16" r="2.2"/><circle cx="12.5" cy="6" r="2.2"/><path d="M4 5.2 V13.8 M12.5 8.2 Q12.5 12 5 13.5"/></svg>
<div class="t sti" style="left:73px;top:1000px">master*+</div>
<svg class="a" style="left:141px;top:998px" width="18" height="17" viewBox="0 0 18 17" fill="none" stroke="#cccccc" stroke-width="1.3"><path d="M2.5 7 A6.5 6.5 0 0 1 14 4 M15.5 10 A6.5 6.5 0 0 1 4 13"/><path d="M14.5 0.5 V4.5 H10.5 M3.5 16.5 V12.5 H7.5"/></svg>
<svg class="a" style="left:178px;top:999px" width="16" height="16" viewBox="0 0 16 16" fill="none" stroke="#cccccc" stroke-width="1.2"><circle cx="8" cy="8" r="7"/><path d="M5 5 L11 11 M11 5 L5 11"/></svg>
<div class="t sti" style="left:199px;top:1000px">0</div>
<svg class="a" style="left:212px;top:999px" width="17" height="15" viewBox="0 0 17 15" fill="none" stroke="#cccccc" stroke-width="1.2"><path d="M8.5 1 L16 14 H1 Z"/><path d="M8.5 5 V10 M8.5 11.5 V12.8"/></svg>
<div class="t sti" style="left:233px;top:1000px">300</div>
<svg class="a" style="left:279px;top:998px" width="16" height="17" viewBox="0 0 16 17" fill="none" stroke="#cccccc" stroke-width="1.2"><circle cx="8" cy="6" r="1.6"/><path d="M3.5 2 A6 6 0 0 0 3.5 10 M12.5 2 A6 6 0 0 1 12.5 10 M8 8 L4 16 M8 8 L12 16 M5.5 13 H10.5"/></svg>
<div class="t sti" style="left:299px;top:1000px">0</div>
<div class="t sti" style="left:1514px;top:1000px">Ln 52, Col 16</div>
<div class="t sti" style="left:1619px;top:1000px">Spaces: 4</div>
<div class="t sti" style="left:1700px;top:1000px">UTF-8</div>
<div class="t sti" style="left:1759px;top:1000px">LF</div>
<div class="t sti" style="left:1793px;top:1000px">Markdown</div>
<svg class="a" style="left:1884px;top:998px" width="16" height="18" viewBox="0 0 16 18" fill="none" stroke="#cccccc" stroke-width="1.3"><path d="M3 13 V7.5 A5 5 0 0 1 13 7.5 V13 L14.5 14.5 H1.5 Z M6 15.5 A2 2 0 0 0 10 15.5"/></svg>

<!-- ===== Event Viewer ===== -->
<div id="ev" class="a">
<div class="a" style="left:-158px;top:-61px;width:1920px;height:1020px">
<!-- title bar -->
<div class="a" style="left:158px;top:61px;width:1570px;height:39px;background:#eff3f4;border-bottom:1px solid #e4e4e4;border-top:1px solid #fafafa"></div>
<svg class="a" style="left:169px;top:70px" width="19" height="20"><use href="#evicon"/></svg>
<div class="t e" style="left:194px;top:71px">事件查看器</div>
<div class="a" style="left:1575px;top:79px;width:12px;height:1.2px;background:#111"></div>
<div class="a" style="left:1633px;top:74px;width:12px;height:12px;border:1.2px solid #111;border-radius:2px"></div>
<svg class="a" style="left:1691px;top:73px" width="14" height="14" viewBox="0 0 14 14"><path d="M1 1 L13 13 M13 1 L1 13" stroke="#111" stroke-width="1.2"/></svg>
<!-- menu bar -->
<div class="a" style="left:158px;top:100px;width:1570px;height:27px;background:#fff;border-bottom:1px solid #cfcfcf"></div>
<div class="t e" style="left:170px;top:105px">文件(F)</div>
<div class="t e" style="left:238px;top:105px">操作(A)</div>
<div class="t e" style="left:308px;top:105px">查看(V)</div>
<div class="t e" style="left:378px;top:105px">帮助(H)</div>
<!-- toolbar -->
<div class="a" style="left:158px;top:128px;width:1570px;height:28px;background:#fff;border-bottom:1px solid #e6e6e6"></div>
<svg class="a" style="left:164px;top:134px" width="21" height="19" viewBox="0 0 21 19"><path d="M1 9.5 L9 1 V5.5 H19.5 Q20.5 5.5 20.5 6.5 V12.5 Q20.5 13.5 19.5 13.5 H9 V18 Z" fill="url(#gblue)" stroke="#2a78c0" stroke-width=".8"/></svg>
<svg class="a" style="left:193px;top:134px" width="21" height="19" viewBox="0 0 21 19"><path d="M20 9.5 L12 1 V5.5 H1.5 Q.5 5.5 .5 6.5 V12.5 Q.5 13.5 1.5 13.5 H12 V18 Z" fill="url(#ggray)" stroke="#666" stroke-width=".8"/></svg>
<div class="a" style="left:219px;top:130px;width:1px;height:25px;background:#a5a5a5"></div>
<svg class="a" style="left:232px;top:134px" width="20" height="20" viewBox="0 0 20 20"><path d="M1.5 6 H18 V18.5 H1.5 Z" fill="url(#gfold)" stroke="#b89440" stroke-width=".8"/><path d="M4 14 Q5 7 11 5 L10 2.5 L15 5 L11.5 9 L11.5 7 Q7 8.5 4 14 Z" fill="#3cb83c" stroke="#1f8a1f" stroke-width=".6"/></svg>
<div class="a" style="left:257px;top:129px;width:28px;height:27px;background:#d9ebfb;border:1px solid #c2dcf4"></div>
<svg class="a" style="left:262px;top:135px" width="20" height="18" viewBox="0 0 20 18"><rect x=".5" y=".5" width="19" height="17" fill="#e8e8e8" stroke="#777" stroke-width="1"/><rect x="1" y="1" width="18" height="3" fill="#9a9a9a"/><rect x="7" y="6" width="11.5" height="10.5" fill="#fff" stroke="#999" stroke-width=".6"/><path d="M14 8 L10 11.2 L14 14.5 Z" fill="#2fb82f"/><path d="M2.5 7.5 H5 M2.5 10.5 H5 M2.5 13.5 H5" stroke="#4a86c8" stroke-width="1"/></svg>
<div class="a" style="left:287px;top:130px;width:1px;height:25px;background:#c8c8c8"></div>
<svg class="a" style="left:300px;top:133px" width="17" height="20" viewBox="0 0 17 20"><rect x=".5" y=".5" width="16" height="19" fill="url(#ghelp)" stroke="#1a2a80" stroke-width="1"/><path d="M5.5 6.5 Q5.5 3.5 8.7 3.5 Q12 3.5 12 6.3 Q12 8 10 9.3 Q8.7 10.2 8.7 12.3" stroke="#fff" stroke-width="2" fill="none"/><circle cx="8.7" cy="15.5" r="1.2" fill="#fff"/></svg>
<div class="a" style="left:324px;top:129px;width:29px;height:27px;background:#d9ebfb;border:1px solid #c2dcf4"></div>
<svg class="a" style="left:329px;top:135px" width="20" height="18" viewBox="0 0 20 18"><rect x=".5" y=".5" width="19" height="17" fill="#e8e8e8" stroke="#777" stroke-width="1"/><rect x="1" y="1" width="18" height="3" fill="#9a9a9a"/><rect x="1.5" y="6" width="11.5" height="10.5" fill="#fff" stroke="#999" stroke-width=".6"/><path d="M5.5 8 L9.5 11.2 L5.5 14.5 Z" fill="#2fb82f"/><path d="M15 7.5 H17.5 M15 10.5 H17.5 M15 13.5 H17.5" stroke="#4a86c8" stroke-width="1"/></svg>

<div class="a" style="left:158px;top:157px;width:1570px;height:7px;background:#f0f0f0"></div>
<div class="a" style="left:158px;top:164px;width:1570px;height:5px;background:#b7cfe8"></div>
<div class="a" style="left:158px;top:164px;width:5px;height:837px;background:#a3a3a3"></div>
<div class="a" style="left:1723px;top:164px;width:5px;height:837px;background:#a7a7a7"></div>
<div class="a" style="left:158px;top:997px;width:1570px;height:4px;background:#a8a8a8"></div>
<!-- status strip -->
<div class="a" style="left:163px;top:968px;width:1560px;height:29px;background:#f0f0f0"></div>
<div class="a" style="left:1447px;top:970px;width:1px;height:26px;background:#dcdcdc"></div>
<div class="a" style="left:1613px;top:970px;width:1px;height:26px;background:#dcdcdc"></div>
<svg width="0" height="0" style="position:absolute">
 <defs>
  <linearGradient id="gfold" x1="0" y1="0" x2="0" y2="1"><stop offset="0" stop-color="#fbe9b0"/><stop offset="1" stop-color="#e2bf68"/></linearGradient>
  <linearGradient id="gblue" x1="0" y1="0" x2="0" y2="1"><stop offset="0" stop-color="#7cc4f8"/><stop offset="1" stop-color="#1b7fd6"/></linearGradient>
  <linearGradient id="ggray" x1="0" y1="0" x2="0" y2="1"><stop offset="0" stop-color="#b8b8b8"/><stop offset="1" stop-color="#6f6f6f"/></linearGradient>
  <linearGradient id="ghelp" x1="0" y1="0" x2="1" y2="0"><stop offset="0" stop-color="#1b2f9a"/><stop offset=".5" stop-color="#5b79e0"/><stop offset="1" stop-color="#2c45b5"/></linearGradient>
  <symbol id="log" viewBox="0 0 19 20">
   <rect x="3" y="1.5" width="14.5" height="17" fill="#f8fafd" stroke="#6f7fb8" stroke-width="1"/>
   <path d="M5 5 H15.5 M5 8 H15.5 M5 11 H15.5 M5 14 H15.5 M5 16.5 H15.5" stroke="#9fbcdc" stroke-width="1"/>
   <rect x="1.5" y="2" width="2.5" height="16.5" fill="#9a9a9a"/>
   <path d="M1.5 3 V18" stroke="#5a5a5a" stroke-width="1.6" stroke-dasharray="1 1"/>
  </symbol>
  <symbol id="logw" viewBox="0 0 19 20">
   <rect x="3" y="1.5" width="14.5" height="17" fill="#f8fafd" stroke="#6f7fb8" stroke-width="1"/>
   <path d="M5 5 H15.5 M5 8 H15.5 M5 11 H15.5 M5 14 H15.5 M5 16.5 H15.5" stroke="#9fbcdc" stroke-width="1"/>
   <rect x="1.5" y="2" width="2.5" height="16.5" fill="#9a9a9a"/>
   <path d="M1.5 3 V18" stroke="#5a5a5a" stroke-width="1.6" stroke-dasharray="1 1"/>
   <path d="M12.5 3 L15.5 9 H9.5 Z" fill="#f2dc1e" stroke="#c8b000" stroke-width=".5"/>
   <circle cx="7.2" cy="13" r="2.3" fill="#d32f2f"/>
  </symbol>
  <symbol id="evicon" viewBox="0 0 19 20">
   <rect x="2.5" y="1.5" width="15" height="17" fill="#b9cbe6" stroke="#4f6590" stroke-width="1"/>
   <rect x="4.5" y="3.5" width="11" height="13" fill="#e6eef9"/>
   <path d="M5.5 6 H14.5 M5.5 9 H14.5 M5.5 12 H14.5" stroke="#9db5da" stroke-width="1"/>
   <path d="M2.5 2.5 V17.5" stroke="#4a4a4a" stroke-width="2.4" stroke-dasharray="1.2 1.2"/>
   <path d="M12 2.5 L16 9 H8 Z" fill="#f6c800" stroke="#a88400" stroke-width=".7"/>
   <path d="M12 4.5 V7" stroke="#333" stroke-width=".9"/>
   <circle cx="8.5" cy="13.5" r="3.2" fill="#e03a3a" stroke="#fff" stroke-width=".6"/><path d="M7.3 12.3 L9.7 14.7 M9.7 12.3 L7.3 14.7" stroke="#fff" stroke-width=".8"/>
  </symbol>
  <symbol id="folder" viewBox="0 0 20 20">
   <path d="M1 4 H7 L9 2 H16 V16 H1 Z" fill="#d9b45a" stroke="#b99440" stroke-width=".6"/>
   <path d="M1.5 7 H17 V17 H1.5 Z" fill="url(#gfold)" stroke="#c9a450" stroke-width=".6"/>
  </symbol>
  <symbol id="chev" viewBox="0 0 8 10"><path d="M2 1.5 L5.5 5 L2 8.5" stroke="#8a8a8a" stroke-width="1.1" fill="none"/></symbol>
  <symbol id="chevd" viewBox="0 0 10 8"><path d="M1.5 2 L5 5.5 L8.5 2" stroke="#555" stroke-width="1.1" fill="none"/></symbol>
  <symbol id="key" viewBox="0 0 20 20">
   <path d="M9.5 10.5 L16.5 17.5" stroke="#c8872a" stroke-width="3.6" stroke-linecap="round"/>
   <path d="M9.5 10.5 L16.5 17.5" stroke="#f6bf3e" stroke-width="2" stroke-linecap="round"/>
   <circle cx="7" cy="7.5" r="5.6" fill="#f4c04a" stroke="#c98b2b" stroke-width="1.1"/>
   <path d="M4.5 9.5 Q4.5 5.5 8.5 4.8" stroke="#fff" stroke-width="1.8" fill="none" stroke-linecap="round"/>
  </symbol>
  <symbol id="keyo" viewBox="0 0 20 20">
   <path d="M9.5 10.5 L16.5 17.5" stroke="#8f8d5a" stroke-width="3.6" stroke-linecap="round"/>
   <path d="M9.5 10.5 L16.5 17.5" stroke="#c9c27e" stroke-width="2" stroke-linecap="round"/>
   <circle cx="7" cy="7.5" r="5.6" fill="#c5bd78" stroke="#8f9a7a" stroke-width="1.1"/>
   <path d="M4.5 9.5 Q4.5 5.5 8.5 4.8" stroke="#fff" stroke-width="1.8" fill="none" stroke-linecap="round"/>
  </symbol>
 </defs>
</svg>
<!-- tree panel -->
<div class="a" style="left:163px;top:169px;width:335px;height:800px;background:#fff;border:1px solid #8d95a0;border-right-color:#8d95a0"></div>
<svg class="a" style="left:170px;top:173px" width="19" height="20"><use href="#evicon"/></svg>
<div class="t e" style="left:196px;top:176px">事件查看器 (本地)</div>
<svg class="a" style="left:175px;top:201px" width="8" height="10"><use href="#chev"/></svg>
<svg class="a" style="left:193px;top:195px" width="20" height="20"><use href="#folder"/></svg>
<svg class="a" style="left:202px;top:205px" width="11" height="10" viewBox="0 0 11 10"><path d="M0.5 0.5 H10.5 L6.5 5 V9.5 H4.5 V5 Z" fill="#6b8bb0" stroke="#3f5f88" stroke-width=".6"/></svg>
<div class="t e" style="left:220px;top:198px">自定义视图</div>
<svg class="a" style="left:174px;top:224px" width="10" height="8"><use href="#chevd"/></svg>
<svg class="a" style="left:193px;top:217px" width="20" height="20"><use href="#folder"/></svg>
<svg class="a" style="left:201px;top:225px" width="13" height="12" viewBox="0 0 13 12"><rect x="0.5" y="0.5" width="12" height="8" fill="#1640c8" stroke="#333" stroke-width=".8"/><rect x="4" y="9" width="5" height="2.5" fill="#777"/></svg>
<div class="t e" style="left:220px;top:221px">Windows 日志</div>
<div class="a" style="left:214px;top:261px;width:64px;height:23px;background:#cce8ff;border:1px solid #70b6ee;border-radius:2px"></div>
<svg class="a" style="left:217px;top:240px" width="19" height="20"><use href="#logw"/></svg>
<div class="t e" style="left:243px;top:243px">应用程序</div>
<svg class="a" style="left:217px;top:263px" width="19" height="20"><use href="#logw"/></svg>
<div class="t e" style="left:243px;top:265px">安全</div>
<svg class="a" style="left:217px;top:285px" width="19" height="20"><use href="#log"/></svg>
<div class="t e" style="left:243px;top:288px">Setup</div>
<svg class="a" style="left:217px;top:308px" width="19" height="20"><use href="#logw"/></svg>
<div class="t e" style="left:243px;top:310px">系统</div>
<svg class="a" style="left:217px;top:330px" width="19" height="20"><use href="#log"/></svg>
<div class="t e" style="left:243px;top:333px">Forwarded Events</div>
<svg class="a" style="left:175px;top:358px" width="8" height="10"><use href="#chev"/></svg>
<svg class="a" style="left:193px;top:352px" width="20" height="20"><use href="#folder"/></svg>
<svg class="a" style="left:202px;top:361px" width="11" height="10" viewBox="0 0 11 10"><rect x=".5" y=".5" width="10" height="9" fill="#f4f4f4" stroke="#888" stroke-width=".8"/><rect x=".5" y=".5" width="10" height="2" fill="#9aa"/></svg>
<div class="t e" style="left:220px;top:355px">应用程序和服务日志</div>
<svg class="a" style="left:175px;top:381px" width="8" height="10"><use href="#chev"/></svg>
<svg class="a" style="left:193px;top:374px" width="20" height="20"><use href="#folder"/></svg>
<svg class="a" style="left:203px;top:382px" width="10" height="12" viewBox="0 0 10 12"><rect x=".5" y=".5" width="9" height="11" fill="#c8c8c8" stroke="#666" stroke-width=".8"/><path d="M2 3 H8 M2 5.5 H8 M2 8 H8" stroke="#777" stroke-width=".8"/></svg>
<div class="t e" style="left:220px;top:378px">保存的日志</div>
<svg class="a" style="left:193px;top:397px" width="20" height="20"><use href="#folder"/></svg>
<svg class="a" style="left:199px;top:405px" width="14" height="12" viewBox="0 0 14 12"><rect x=".5" y=".5" width="13" height="11" fill="#f4f6fb" stroke="#7a8aa8" stroke-width=".8"/><path d="M2 6 L4 8.5 L7 4" stroke="#2a64d0" stroke-width="1.2" fill="none"/><circle cx="12" cy="2" r="2" fill="#e03030"/></svg>
<div class="t e" style="left:220px;top:400px">订阅</div>

<div class="a" style="left:502px;top:169px;width:861px;height:29px;background:#696969;border-top:1px solid #8a8a8a"></div>
<div class="t" style="left:513px;top:176px;color:#fff;font-size:15px;font-weight:bold">安全</div>
<div class="t" style="left:567px;top:176px;color:#f4f4f4;font-size:15px">事件数: 37,426 (!) 可用的新事件</div>
<div class="a" style="left:502px;top:199px;width:857px;height:197px;background:#8c8c8c;border-top:1px solid #6b6b6b;border-left:1px solid #6b6b6b"></div>
<div class="a" style="left:506px;top:204px;width:853px;height:191px;background:#fff;border-top:1px solid #6b6b6b;border-left:1px solid #6b6b6b;border-right:1px solid #777;border-bottom:1px solid #8c8c8c"></div>
<div class="a" style="left:1359px;top:199px;width:3px;height:198px;background:#fafafa"></div>
<div class="a" style="left:738px;top:205px;width:1px;height:30px;background:#e8e8e8"></div>
<div class="a" style="left:1082px;top:205px;width:1px;height:30px;background:#e8e8e8"></div>
<div class="a" style="left:1314px;top:205px;width:1px;height:30px;background:#e8e8e8"></div>
<div class="t e" style="left:516px;top:213px">关键字</div>
<div class="t e" style="left:748px;top:213px">日期和时间</div>
<div class="t e" style="left:1090px;top:213px">来源</div>
<div class="a" style="left:533px;top:235px;width:804px;height:26px;background:#f0f0f0"></div>
<svg class="a" style="left:513px;top:237.0px" width="20" height="20"><use href="#keyo"/></svg>
<div class="t e" style="left:536px;top:240.0px">审核成功</div>
<div class="t e" style="left:747px;top:240.0px;font-size:16px;-webkit-text-stroke:0">2024/8/6 11:27:25</div>
<div class="t e" style="left:1091px;top:241.0px;font-size:15.6px;-webkit-text-stroke:0">Security-Auditing</div>
<svg class="a" style="left:513px;top:263.3px" width="20" height="20"><use href="#key"/></svg>
<div class="t e" style="left:536px;top:266.3px">审核成功</div>
<div class="t e" style="left:747px;top:266.3px;font-size:16px;-webkit-text-stroke:0">2024/8/6 11:27:20</div>
<div class="t e" style="left:1091px;top:267.3px;font-size:15.6px;-webkit-text-stroke:0">Security-Auditing</div>
<svg class="a" style="left:513px;top:289.6px" width="20" height="20"><use href="#key"/></svg>
<div class="t e" style="left:536px;top:292.6px">审核成功</div>
<div class="t e" style="left:747px;top:292.6px;font-size:16px;-webkit-text-stroke:0">2024/8/6 11:27:15</div>
<div class="t e" style="left:1091px;top:293.6px;font-size:15.6px;-webkit-text-stroke:0">Security-Auditing</div>
<svg class="a" style="left:513px;top:315.9px" width="20" height="20"><use href="#key"/></svg>
<div class="t e" style="left:536px;top:318.9px">审核成功</div>
<div class="t e" style="left:747px;top:318.9px;font-size:16px;-webkit-text-stroke:0">2024/8/6 11:27:10</div>
<div class="t e" style="left:1091px;top:319.9px;font-size:15.6px;-webkit-text-stroke:0">Security-Auditing</div>
<svg class="a" style="left:513px;top:342.2px" width="20" height="20"><use href="#key"/></svg>
<div class="t e" style="left:536px;top:345.2px">审核成功</div>
<div class="t e" style="left:747px;top:345.2px;font-size:16px;-webkit-text-stroke:0">2024/8/6 11:27:05</div>
<div class="t e" style="left:1091px;top:346.2px;font-size:15.6px;-webkit-text-stroke:0">Security-Auditing</div>
<svg class="a" style="left:513px;top:368.5px" width="20" height="20"><use href="#key"/></svg>
<div class="t e" style="left:536px;top:371.5px">审核成功</div>
<div class="t e" style="left:747px;top:371.5px;font-size:16px;-webkit-text-stroke:0">2024/8/6 11:27:00</div>
<div class="t e" style="left:1091px;top:372.5px;font-size:15.6px;-webkit-text-stroke:0">Security-Auditing</div>
<div class="a" style="left:507px;top:374px;width:851px;height:20px;background:#f0f0f0"></div>
<div class="a" style="left:529px;top:380px;width:512px;height:10px;background:#858585"></div>
<div class="a" style="left:1337px;top:205px;width:21px;height:169px;background:#f0f0f0"></div>
<div class="a" style="left:1342px;top:227px;width:11px;height:21px;background:#858585"></div>
<div class="a" style="left:502px;top:403px;width:857px;height:565px;background:#f0f0f0;border-top:2px solid #8a8a8a;border-left:5px solid #8a8a8a;border-right:1px solid #fff;border-bottom:2px solid #fafafa"></div>
<div class="a" style="left:502px;top:403px;width:2px;height:562px;background:#6e6e6e"></div>
<div class="a" style="left:507px;top:964px;width:852px;height:1px;background:#e2e2e2"></div>
<div class="t" style="left:513px;top:409px;color:#000;font-size:15px">事件</div>
<div class="t" style="left:550px;top:410px;color:#000;font-size:14.5px;font-family:'Liberation Mono',monospace;letter-spacing:-1.2px">4798</div>
<div class="t" style="left:577px;top:409px;color:#000;font-size:15px">，</div>
<div class="t" style="left:595px;top:410px;color:#000;font-size:14.5px;font-family:'Liberation Mono',monospace;letter-spacing:-1.2px">Security-Auditing</div>
<div class="a" style="left:502px;top:395px;width:5px;height:9px;background:#7c7c7c"></div>
<div class="a" style="left:507px;top:398px;width:852px;height:2px;background:#fbfbfb"></div>
<svg class="a" style="left:1333px;top:410px" width="12" height="12" viewBox="0 0 12 12"><path d="M1.5 1.5 L10.5 10.5 M10.5 1.5 L1.5 10.5" stroke="#000" stroke-width="2.4"/></svg>
<div class="a" style="left:511px;top:431px;width:843px;height:2px;background:#a3a3a3"></div>
<div class="a" style="left:518px;top:441px;width:63px;height:32px;background:#f9f9f9"></div>
<div class="a" style="left:581px;top:444px;width:71px;height:27px;background:#f4f4f4"></div>
<div class="t e" style="left:527px;top:447px">常规</div>
<div class="t e" style="left:587px;top:449px">详细信息</div>
<div class="a" style="left:517px;top:472px;width:831px;height:482px;border:3px solid #f8f8f8;background:#f0f0f0"></div>
<div class="a" style="left:536px;top:493px;width:770px;height:205px;background:#f0f0f0;border-top:2px solid #7a7a7a;border-left:2px solid #7a7a7a;border-right:1px solid #fafafa;border-bottom:1px solid #fafafa"></div>
<div class="a" style="left:1283px;top:495px;width:1px;height:202px;background:#fafafa"></div>
<div class="a" style="left:1288px;top:515px;width:11px;height:69px;background:#858585"></div>
<div class="t e" style="left:540px;top:501px">已枚举用户的本地组成员身份。</div>
<div class="t e" style="left:539px;top:559px">使用者:</div>
<div class="t e" style="left:599px;top:587px">安全 ID:</div>
<div class="t e" style="left:719px;top:588.0px;font-size:15.6px;-webkit-text-stroke:0">SYSTEM</div>
<div class="t e" style="left:599px;top:616px">帐户名称:</div>
<div class="t e" style="left:779px;top:617.0px;font-size:15.6px;-webkit-text-stroke:0">CWLYEYE$</div>
<div class="t e" style="left:599px;top:644px">帐户域:</div>
<div class="t e" style="left:719px;top:645.0px;font-size:15.6px;-webkit-text-stroke:0">WORKGROUP</div>
<div class="t e" style="left:599px;top:673px">登录 ID:</div>
<div class="t e" style="left:719px;top:674.0px;font-size:15.6px;-webkit-text-stroke:0">0x3E7</div>
<div class="t e" style="left:533px;top:719px">日志名称(<u>M</u>):</div>
<div class="t e" style="left:673px;top:720.0px;font-size:15.6px;-webkit-text-stroke:0">安全</div>
<div class="t e" style="left:533px;top:749px">来源(<u>S</u>):</div>
<div class="t e" style="left:673px;top:750.0px;font-size:15.6px;-webkit-text-stroke:0">Security-Auditing</div>
<div class="t e" style="left:870px;top:749px">记录时间(<u>D</u>):</div>
<div class="t e" style="left:969px;top:750.0px;font-size:15.6px;-webkit-text-stroke:0">2024/8/6 11:27:25</div>
<div class="t e" style="left:533px;top:779px">事件 ID(<u>E</u>):</div>
<div class="t e" style="left:673px;top:780.0px;font-size:15.6px;-webkit-text-stroke:0">4798</div>
<div class="t e" style="left:870px;top:779px">任务类别(<u>Y</u>):</div>
<div class="t e" style="left:969px;top:780.0px;font-size:15.6px;-webkit-text-stroke:0">User Account Management</div>
<div class="t e" style="left:533px;top:809px">级别(<u>L</u>):</div>
<div class="t e" style="left:673px;top:810.0px;font-size:15.6px;-webkit-text-stroke:0">信息</div>
<div class="t e" style="left:870px;top:809px">关键字(<u>K</u>):</div>
<div class="t e" style="left:969px;top:810.0px;font-size:15.6px;-webkit-text-stroke:0">审核成功</div>
<div class="t e" style="left:533px;top:839px">用户(<u>U</u>):</div>
<div class="t e" style="left:673px;top:840.0px;font-size:15.6px;-webkit-text-stroke:0">暂缺</div>
<div class="t e" style="left:870px;top:839px">计算机(<u>R</u>):</div>
<div class="t e" style="left:969px;top:840.0px;font-size:15.6px;-webkit-text-stroke:0">CwlYEYE</div>
<div class="t e" style="left:533px;top:869px">操作代码(<u>O</u>):</div>
<div class="t e" style="left:673px;top:870.0px;font-size:15.6px;-webkit-text-stroke:0">信息</div>
<div class="t e" style="left:533px;top:899px">更多信息(<u>I</u>):</div>
<div class="t" style="left:677px;top:899px;color:#0000ee;font-size:15px;text-decoration:underline">事件日志联机帮助</div>
<div class="a" style="left:1368px;top:169px;width:355px;height:799px;background:#fff;border-top:3px solid #7d7d7d;border-left:2px solid #7d7d7d"></div>
<div class="a" style="left:1370px;top:172px;width:352px;height:25px;background:#efefef"></div>
<div class="a" style="left:1370px;top:196px;width:352px;height:2px;background:#b5b5b5"></div><div class="a" style="left:1370px;top:198px;width:352px;height:1px;background:#fafcff"></div>
<div class="t" style="left:1377px;top:178px;color:#000;font-size:15px;font-weight:bold">操作</div>
<div class="a" style="left:1370px;top:199px;width:351px;height:31px;background:linear-gradient(#bad2eb,#97b3d3)"></div>
<div class="t e" style="left:1380px;top:208px">安全</div>
<svg class="a" style="left:1700px;top:211px" width="13" height="8" viewBox="0 0 13 8"><path d="M0.5 7.5 L6.5 0.5 L12.5 7.5 Z" fill="#000"/></svg>
<div class="a" style="left:1370px;top:601px;width:351px;height:31px;background:linear-gradient(#bad2eb,#97b3d3)"></div>
<div class="t e" style="left:1380px;top:610px">事件 4798，Security-Auditing</div>
<svg class="a" style="left:1700px;top:613px" width="13" height="8" viewBox="0 0 13 8"><path d="M0.5 7.5 L6.5 0.5 L12.5 7.5 Z" fill="#000"/></svg>
<svg class="a" style="left:1376px;top:236px" width="20" height="20" viewBox="0 0 20 20"><path d="M1 6 H7 L9 4 H16 V16 H1 Z" fill="#d8b660" stroke="#b89440" stroke-width=".6"/><path d="M3 9 H19 L16.5 17 H1 Z" fill="url(#gfold)" stroke="#b89440" stroke-width=".6"/><circle cx="12" cy="5" r="1.2" fill="#3a8ad8"/><path d="M12 1 H14.5" stroke="#2ecc40" stroke-width="1"/></svg>
<div class="t e" style="left:1409px;top:238px">打开保存的日志...</div>
<svg class="a" style="left:1377px;top:266px" width="20" height="20" viewBox="0 0 20 20"><path d="M1 2 H19 L12 9 V18 L9 19 V9 Z" fill="#9ab0c8" stroke="#6a8098" stroke-width=".6"/><path d="M1 2 H11 L8 8 Z" fill="#f2a90f"/></svg>
<div class="t e" style="left:1409px;top:268px">创建自定义视图...</div>
<div class="t e" style="left:1409px;top:298px">导入自定义视图...</div>
<div class="t e" style="left:1409px;top:329px">清除日志...</div>
<svg class="a" style="left:1377px;top:357px" width="20" height="20" viewBox="0 0 20 20"><path d="M1 2 H19 L12 9 V18 L9 19 V9 Z" fill="#a8c0d8" stroke="#6a8098" stroke-width=".6"/><path d="M2 3 H18" stroke="#e8f0f8" stroke-width="1"/></svg>
<div class="t e" style="left:1409px;top:359px">筛选当前日志...</div>
<svg class="a" style="left:1376px;top:387px" width="20" height="20" viewBox="0 0 20 20"><rect x="1.5" y="1.5" width="16" height="17" rx="1" fill="#f6f7f9" stroke="#8a8f98" stroke-width="1"/><rect x="1.5" y="1.5" width="16" height="3" fill="#c8ccd4"/><path d="M5 8 H14 M5 11 H14 M5 14 H14" stroke="#6d8fbf" stroke-width="1"/><rect x="6" y="18" width="7" height="1.5" fill="#3aa0e8"/></svg>
<div class="t e" style="left:1409px;top:389px">属性</div>
<svg class="a" style="left:1375px;top:417px" width="22" height="20" viewBox="0 0 22 20"><rect x="1" y="3" width="8" height="12" rx="3" fill="#7c8a96" stroke="#3a4550" stroke-width="1"/><rect x="12" y="3" width="8" height="12" rx="3" fill="#7c8a96" stroke="#3a4550" stroke-width="1"/><rect x="8" y="5" width="5" height="5" fill="#5a6570"/><circle cx="5" cy="16" r="2.5" fill="#3a9ae8"/><circle cx="16" cy="16" r="2.5" fill="#3a9ae8"/></svg>
<div class="t e" style="left:1409px;top:419px">查找...</div>
<svg class="a" style="left:1377px;top:447px" width="19" height="20" viewBox="0 0 19 20"><path d="M1 1 H16 L18 3 V19 H1 Z" fill="#3a3a3a"/><rect x="4" y="1.5" width="10" height="7" fill="#f4f4f4"/><rect x="4" y="12" width="10" height="7" fill="#9a9a9a"/><rect x="6" y="13.5" width="3" height="4" fill="#333"/></svg>
<div class="t e" style="left:1409px;top:449px">将所有事件另存为...</div>
<div class="t e" style="left:1409px;top:479px">将任务附加到此日志...</div>
<div class="t e" style="left:1409px;top:510px">查看</div>
<svg class="a" style="left:1703px;top:511px" width="8" height="14" viewBox="0 0 8 14"><path d="M0.5 0.5 L7.5 7 L0.5 13.5 Z" fill="#000"/></svg>
<svg class="a" style="left:1377px;top:539px" width="18" height="20" viewBox="0 0 18 20"><path d="M1 1 H12 L17 6 V19 H1 Z" fill="#f8f8f8" stroke="#9aa0a8" stroke-width="1"/><path d="M12 1 V6 H17" fill="#ddd" stroke="#9aa0a8" stroke-width=".8"/><path d="M13 12 A4.5 4.5 0 1 1 10 8" stroke="#2eb82e" stroke-width="2.2" fill="none"/><path d="M9 5.5 L12.5 8.2 L9 10.5 Z" fill="#2eb82e"/></svg>
<div class="t e" style="left:1409px;top:541px">刷新</div>
<svg class="a" style="left:1377px;top:570px" width="17" height="20" viewBox="0 0 17 20"><rect x=".5" y=".5" width="16" height="19" fill="url(#ghelp)" stroke="#1a2a80" stroke-width="1"/><path d="M5.5 6.5 Q5.5 3.5 8.7 3.5 Q12 3.5 12 6.3 Q12 8 10 9.3 Q8.7 10.2 8.7 12.3" stroke="#fff" stroke-width="2" fill="none"/><circle cx="8.7" cy="15.5" r="1.2" fill="#fff"/></svg>
<div class="t e" style="left:1409px;top:572px">帮助</div>
<svg class="a" style="left:1703px;top:573px" width="8" height="14" viewBox="0 0 8 14"><path d="M0.5 0.5 L7.5 7 L0.5 13.5 Z" fill="#000"/></svg>
<svg class="a" style="left:1376px;top:638px" width="20" height="20" viewBox="0 0 20 20"><rect x="1.5" y="1.5" width="16" height="17" rx="1" fill="#f6f7f9" stroke="#8a8f98" stroke-width="1"/><rect x="1.5" y="1.5" width="16" height="3" fill="#c8ccd4"/><path d="M5 8 H14 M5 11 H14 M5 14 H14" stroke="#6d8fbf" stroke-width="1"/><rect x="6" y="18" width="7" height="1.5" fill="#3aa0e8"/></svg>
<div class="t e" style="left:1409px;top:640px">事件属性</div>
<svg class="a" style="left:1376px;top:668px" width="21" height="20" viewBox="0 0 21 20"><rect x="1.5" y="2.5" width="17" height="16" rx="1.5" fill="#e8e4de" stroke="#8a8070" stroke-width="1"/><circle cx="10" cy="10.5" r="5.5" fill="#fff" stroke="#555" stroke-width="1"/><path d="M10 7 V10.5 H12.5" stroke="#333" stroke-width="1"/><circle cx="3" cy="3" r="2.5" fill="#f2b80f"/></svg>
<div class="t e" style="left:1409px;top:670px">将任务附加到此事件...</div>
<svg class="a" style="left:1376px;top:698px" width="20" height="20" viewBox="0 0 20 20"><rect x="1" y="1" width="10" height="12" fill="#fafafa" stroke="#9aa0a8" stroke-width="1"/><path d="M3 4 H8 M3 6.5 H8" stroke="#6d8fbf" stroke-width="1"/><rect x="8" y="8" width="11" height="11" fill="#fafafa" stroke="#9aa0a8" stroke-width="1"/><path d="M10.5 12 H16.5 M10.5 14.5 H16.5" stroke="#3a8ad8" stroke-width="1"/></svg>
<div class="t e" style="left:1409px;top:700px">复制</div>
<svg class="a" style="left:1703px;top:701px" width="8" height="14" viewBox="0 0 8 14"><path d="M0.5 0.5 L7.5 7 L0.5 13.5 Z" fill="#000"/></svg>
<svg class="a" style="left:1377px;top:728px" width="19" height="20" viewBox="0 0 19 20"><path d="M1 1 H16 L18 3 V19 H1 Z" fill="#3a3a3a"/><rect x="4" y="1.5" width="10" height="7" fill="#f4f4f4"/><rect x="4" y="12" width="10" height="7" fill="#9a9a9a"/><rect x="6" y="13.5" width="3" height="4" fill="#333"/></svg>
<div class="t e" style="left:1409px;top:730px">保存选择的事件...</div>
<svg class="a" style="left:1377px;top:759px" width="18" height="20" viewBox="0 0 18 20"><path d="M1 1 H12 L17 6 V19 H1 Z" fill="#f8f8f8" stroke="#9aa0a8" stroke-width="1"/><path d="M12 1 V6 H17" fill="#ddd" stroke="#9aa0a8" stroke-width=".8"/><path d="M13 12 A4.5 4.5 0 1 1 10 8" stroke="#2eb82e" stroke-width="2.2" fill="none"/><path d="M9 5.5 L12.5 8.2 L9 10.5 Z" fill="#2eb82e"/></svg>
<div class="t e" style="left:1409px;top:761px">刷新</div>
<svg class="a" style="left:1377px;top:790px" width="17" height="20" viewBox="0 0 17 20"><rect x=".5" y=".5" width="16" height="19" fill="url(#ghelp)" stroke="#1a2a80" stroke-width="1"/><path d="M5.5 6.5 Q5.5 3.5 8.7 3.5 Q12 3.5 12 6.3 Q12 8 10 9.3 Q8.7 10.2 8.7 12.3" stroke="#fff" stroke-width="2" fill="none"/><circle cx="8.7" cy="15.5" r="1.2" fill="#fff"/></svg>
<div class="t e" style="left:1409px;top:792px">帮助</div>
<svg class="a" style="left:1703px;top:793px" width="8" height="14" viewBox="0 0 8 14"><path d="M0.5 0.5 L7.5 7 L0.5 13.5 Z" fill="#000"/></svg>
<div class="a" style="left:1376px;top:321px;width:338px;height:1px;background:#ececec"></div>
<div class="a" style="left:1376px;top:502px;width:338px;height:1px;background:#ececec"></div>
<div class="a" style="left:1376px;top:533px;width:338px;height:1px;background:#ececec"></div>
<div class="a" style="left:1376px;top:564px;width:338px;height:1px;background:#ececec"></div>
<div class="a" style="left:1376px;top:753px;width:338px;height:1px;background:#ececec"></div>
<div class="a" style="left:1376px;top:784px;width:338px;height:1px;background:#ececec"></div>
</div>

</div>
</body></html>
